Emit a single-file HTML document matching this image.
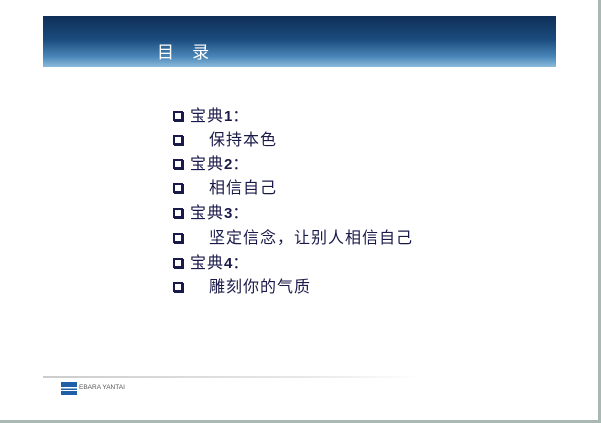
<!DOCTYPE html>
<html><head><meta charset="utf-8"><style>
body{margin:0;width:601px;height:423px;background:#fff;position:relative;overflow:hidden;font-family:"Liberation Sans","Noto Sans CJK SC",sans-serif}
.rb{position:absolute;left:598px;top:0;width:3px;height:423px;background:#a9b8b2}
.bb{position:absolute;left:0;top:420px;width:601px;height:3px;background:#a9b8b2}
.hd{position:absolute;left:43px;top:16px;width:513px;height:51px;background:linear-gradient(#0f2f57 0%,#1a4a7c 45%,#4a86b8 80%,#8bbbdc 100%)}
.hd span{position:absolute;left:114px;top:22px;color:#fff;font-size:17px;letter-spacing:1px}
.it{position:absolute;left:173px;font-size:16px;color:#1a1a4a;line-height:18px;white-space:nowrap;letter-spacing:1px}
.bx{display:inline-block;width:10px;height:10px;border:2px solid #1a1a4a;box-sizing:border-box;margin-right:7px;vertical-align:0px;box-shadow:1px 1px 0 #1a1a4a}
.t2{margin-left:19px}
b{font-weight:bold;font-size:15px;letter-spacing:0}
.ln{position:absolute;left:43px;top:376px;width:380px;height:2px;background:linear-gradient(90deg,#ccc,#e8e8e8 70%,#fff)}
.logo{position:absolute;left:61px;top:382px;width:16px;height:13px;background:linear-gradient(#1f5fa8 0 40%,#fff 40% 50%,#1f5fa8 50% 62%,#fff 62% 70%,#1f5fa8 70%)}
.lt{position:absolute;left:79px;top:384px;font-size:6.5px;color:#555}
</style></head><body>
<div class="hd"><span>目&nbsp;&nbsp;&nbsp;录</span></div>
<div class="it" style="top:108px"><span class="bx"></span>宝典<b>1</b>：</div>
<div class="it" style="top:132px"><span class="bx"></span><span class="t2">保持本色</span></div>
<div class="it" style="top:156px"><span class="bx"></span>宝典<b>2</b>：</div>
<div class="it" style="top:180px"><span class="bx"></span><span class="t2">相信自己</span></div>
<div class="it" style="top:205px"><span class="bx"></span>宝典<b>3</b>：</div>
<div class="it" style="top:230px"><span class="bx"></span><span class="t2">坚定信念，让别人相信自己</span></div>
<div class="it" style="top:255px"><span class="bx"></span>宝典<b>4</b>：</div>
<div class="it" style="top:279px"><span class="bx"></span><span class="t2">雕刻你的气质</span></div>
<div class="ln"></div>
<div class="logo"></div><div class="lt">EBARA YANTAI</div>
<div class="rb"></div><div class="bb"></div>
</body></html>
